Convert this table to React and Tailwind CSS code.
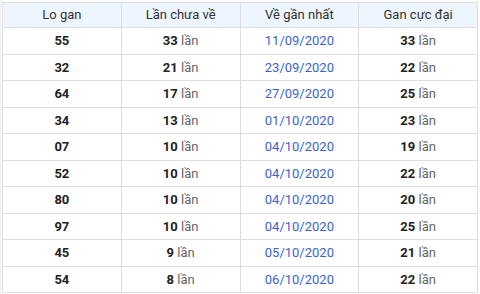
import React from 'react';

const rows = [
  ['55', '33', '11/09/2020', '33'],
  ['32', '21', '23/09/2020', '22'],
  ['64', '17', '27/09/2020', '25'],
  ['34', '13', '01/10/2020', '23'],
  ['07', '10', '04/10/2020', '19'],
  ['52', '10', '04/10/2020', '22'],
  ['80', '10', '04/10/2020', '20'],
  ['97', '10', '04/10/2020', '25'],
  ['45', '9', '05/10/2020', '21'],
  ['54', '8', '06/10/2020', '22'],
];

const Lan = ({ n }) => (
  <>
    <span className="font-bold text-[#222]">{n}</span>{' '}
    <span className="text-[#666]">lần</span>
  </>
);

const App = () => {
  return (
    <div className="w-[480px] h-[294px] bg-white overflow-hidden border-l border-[#eee] pt-[2px] pl-[1px]" style={{ fontFamily: 'Roboto, "Liberation Sans", sans-serif' }}>
      <table className="w-[476px] border-collapse table-fixed text-[13px] text-[#333]">
        <thead>
          <tr className="bg-[#edf5fe]">
            <th className="h-[25px] p-0 border border-[#dedede] font-normal">Lo gan</th>
            <th className="h-[25px] p-0 border border-[#dedede] font-normal">Lần chưa về</th>
            <th className="h-[25px] p-0 border border-[#dedede] font-normal">Về gần nhất</th>
            <th className="h-[25px] p-0 border border-[#dedede] font-normal">Gan cực đại</th>
          </tr>
        </thead>
        <tbody>
          {rows.map((r, i) => (
            <tr key={i} className={i % 2 === 0 ? 'h-[27px] text-center' : 'h-[26px] text-center'}>
              <td className="p-0 border border-[#dedede] font-bold text-[#222]">{r[0]}</td>
              <td className="p-0 border border-[#dedede]"><Lan n={r[1]} /></td>
              <td className="p-0 border border-[#dedede] text-[#3b63cf]">{r[2]}</td>
              <td className="p-0 border border-[#dedede]"><Lan n={r[3]} /></td>
            </tr>
          ))}
        </tbody>
      </table>
    </div>
  );
};

export default App;
